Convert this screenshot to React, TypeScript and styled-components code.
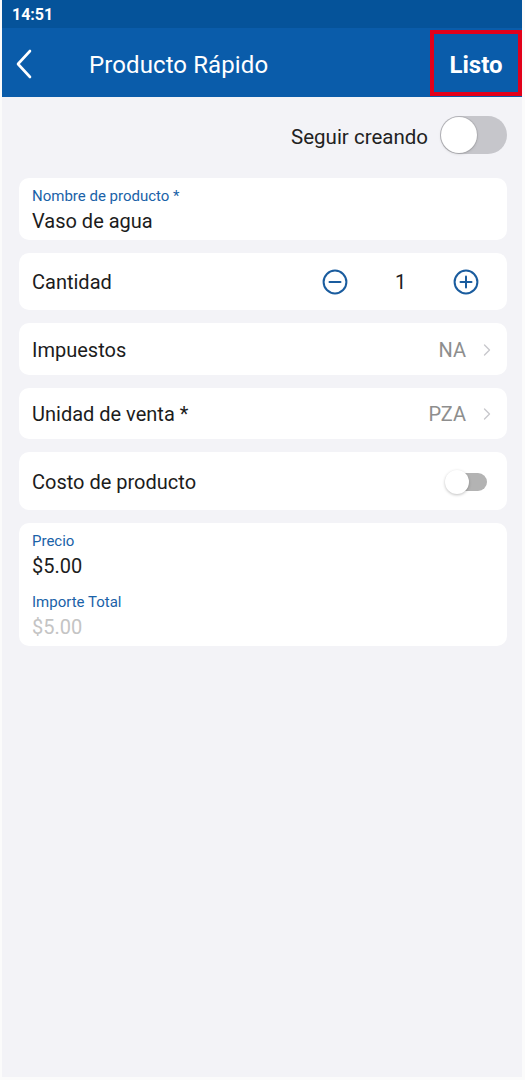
import React from 'react'
import styled, { createGlobalStyle } from 'styled-components'

const GlobalStyle = createGlobalStyle`
  html, body {
    margin: 0;
    padding: 0;
    background: #fbfbfb;
  }
  body {
    font-family: Roboto, 'Liberation Sans', sans-serif;
  }
`

const Screen = styled.div`
  display: flex;
  flex-direction: column;
  width: 520px;
  height: 1077px;
  margin: 0 3px 3px 2px;
  background: #f3f3f7;
`

const StatusBar = styled.div`
  height: 28px;
  background: #05539a;
  color: #fff;
  font-size: 16px;
  font-weight: 700;
  display: flex;
  align-items: center;
  padding-left: 10px;
  padding-top: 1px;
  box-sizing: border-box;
`

const Header = styled.div`
  height: 69px;
  background: #0a5caa;
  display: flex;
  align-items: center;
  color: #fff;
`

const BackButton = styled.div`
  width: 87px;
  display: flex;
  align-items: center;
  padding-left: 13px;
  padding-top: 3px;
  box-sizing: border-box;
`

const Title = styled.div`
  flex: 1;
  font-size: 24px;
  font-weight: 400;
  padding-top: 4px;
  letter-spacing: 0.1px;
`

const DoneButton = styled.div`
  align-self: stretch;
  margin: 2px 0 1px;
  width: 92px;
  border: 4px solid #e2001a;
  box-sizing: border-box;
  display: flex;
  align-items: center;
  justify-content: center;
  padding-top: 3px;
  font-size: 24px;
  font-weight: 700;
`

const Body = styled.div`
  display: flex;
  flex-direction: column;
  gap: 13px;
  padding: 0 15px 0 17px;
`

const ToggleRow = styled.div`
  display: flex;
  align-items: center;
  justify-content: flex-end;
  gap: 12px;
  margin: 19px 0 11px;
  font-size: 20.5px;
  color: #222;
`

const ToggleText = styled.span`
  padding-top: 3px;
`

const Switch = styled.div<{ $small?: boolean }>`
  position: relative;
  width: ${(p) => (p.$small ? 41 : 67)}px;
  height: ${(p) => (p.$small ? 18 : 38)}px;
  border-radius: 20px;
  background: ${(p) => (p.$small ? '#b3b3b3' : '#c6c6cb')};
`

const Knob = styled.span<{ $small?: boolean }>`
  position: absolute;
  top: ${(p) => (p.$small ? -3 : 1)}px;
  left: ${(p) => (p.$small ? -1 : 1)}px;
  width: ${(p) => (p.$small ? 24 : 36)}px;
  height: ${(p) => (p.$small ? 24 : 36)}px;
  border-radius: 50%;
  background: #fff;
  box-shadow: ${(p) =>
    p.$small ? '0 1px 3px rgba(0,0,0,0.25)' : '0 0 0 1px rgba(0,0,0,0.08), 0 1px 3px rgba(0,0,0,0.15)'};
`

const Card = styled.div<{ $h?: number }>`
  background: #fff;
  border-radius: 10px;
  height: ${(p) => p.$h || 52}px;
  padding: 1px 15px 0 13px;
  box-sizing: border-box;
  display: flex;
  align-items: center;
  justify-content: space-between;
  font-size: 20px;
  color: #1c1c1c;
`

const FieldCard = styled.div<{ $h: number }>`
  background: #fff;
  border-radius: 10px;
  height: ${(p) => p.$h}px;
  box-sizing: border-box;
  padding: 9px 15px 0 13px;
  display: flex;
  flex-direction: column;
`

const FieldLabel = styled.div<{ $gap?: number }>`
  font-size: 15px;
  color: #1a62a8;
  margin-top: ${(p) => p.$gap || 0}px;
  line-height: 18px;
`

const FieldValue = styled.div<{ $muted?: boolean }>`
  font-size: 20px;
  line-height: 30px;
  margin-top: 1px;
  color: ${(p) => (p.$muted ? '#c4c4c4' : '#1c1c1c')};
`

const Right = styled.div`
  display: flex;
  align-items: center;
  gap: 16px;
  color: #8e8e8e;
`

const Stepper = styled.div`
  display: flex;
  align-items: center;
  margin-right: 13px;
`

const Count = styled.span`
  width: 105px;
  text-align: center;
  color: #1c1c1c;
`

const Chevron = () => (
  <svg width="10" height="14" viewBox="0 0 10 14" fill="none">
    <path d="M2.5 2 L7.5 7 L2.5 12" stroke="#c8c8cc" strokeWidth="1.4" strokeLinecap="round" strokeLinejoin="round" />
  </svg>
)

const CircleIcon = ({ plus }: { plus?: boolean }) => (
  <svg width="26" height="26" viewBox="0 0 26 26" fill="none">
    <circle cx="13" cy="13" r="11.4" stroke="#1a5c9e" strokeWidth="2" />
    <path d="M7.5 13 H18.5" stroke="#1a5c9e" strokeWidth="2" strokeLinecap="round" />
    {plus && <path d="M13 7.5 V18.5" stroke="#1a5c9e" strokeWidth="2" strokeLinecap="round" />}
  </svg>
)

const App: React.FC = () => {
  return (
    <>
      <GlobalStyle />
      <Screen>
        <StatusBar>14:51</StatusBar>
        <Header>
          <BackButton>
            <svg width="18" height="30" viewBox="0 0 18 30" fill="none">
              <path d="M15 2 L3 15 L15 28" stroke="#fff" strokeWidth="2.6" strokeLinecap="round" strokeLinejoin="round" />
            </svg>
          </BackButton>
          <Title>Producto Rápido</Title>
          <DoneButton>Listo</DoneButton>
        </Header>
        <Body>
          <ToggleRow>
            <ToggleText>Seguir creando</ToggleText>
            <Switch>
              <Knob />
            </Switch>
          </ToggleRow>
          <FieldCard $h={62}>
            <FieldLabel>Nombre de producto *</FieldLabel>
            <FieldValue>Vaso de agua</FieldValue>
          </FieldCard>
          <Card $h={57}>
            Cantidad
            <Stepper>
              <CircleIcon />
              <Count>1</Count>
              <CircleIcon plus />
            </Stepper>
          </Card>
          <Card $h={52}>
            Impuestos
            <Right>
              NA
              <Chevron />
            </Right>
          </Card>
          <Card $h={51}>
            Unidad de venta *
            <Right>
              PZA
              <Chevron />
            </Right>
          </Card>
          <Card $h={58}>
            Costo de producto
            <Switch $small style={{ marginRight: 5 }}>
              <Knob $small />
            </Switch>
          </Card>
          <FieldCard $h={123}>
            <FieldLabel>Precio</FieldLabel>
            <FieldValue>$5.00</FieldValue>
            <FieldLabel $gap={12}>Importe Total</FieldLabel>
            <FieldValue $muted>$5.00</FieldValue>
          </FieldCard>
        </Body>
      </Screen>
    </>
  )
}

export default App
